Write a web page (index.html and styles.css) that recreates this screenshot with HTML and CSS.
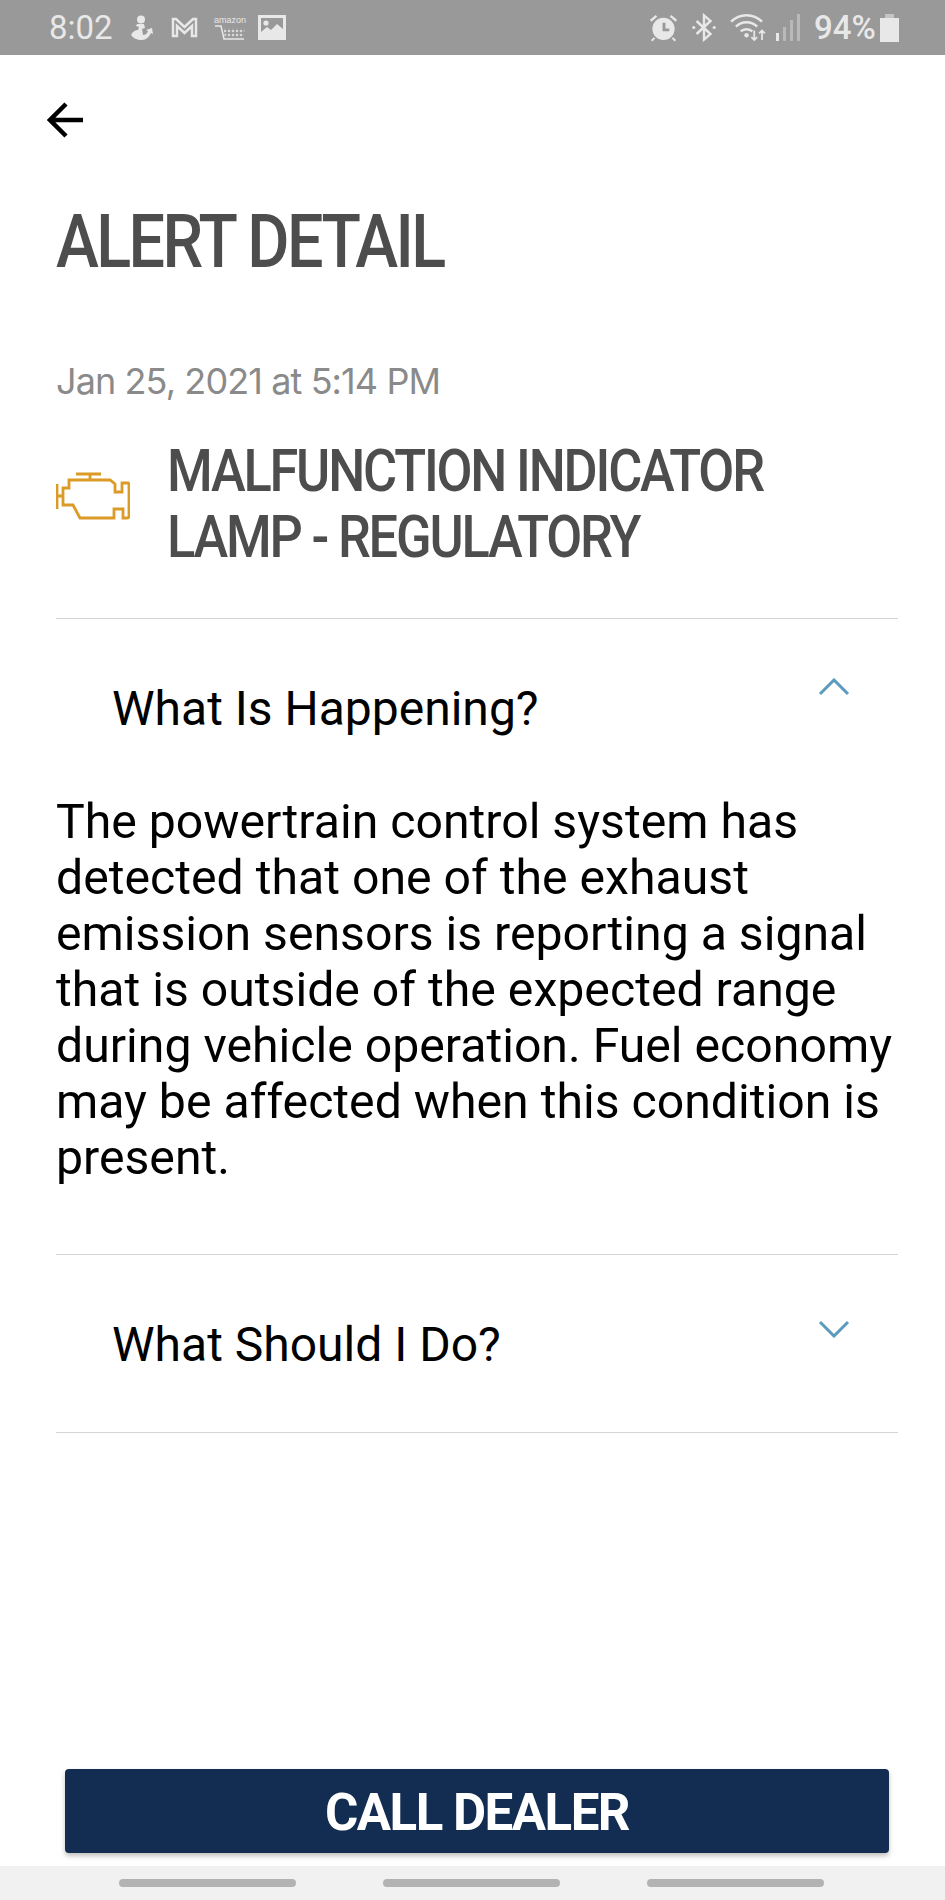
FILE: index.html
```html
<!DOCTYPE html>
<html lang="en">
<head>
  <meta charset="UTF-8">
  <title>Alert Detail</title>
  <link rel="stylesheet" href="styles.css">
</head>
<body>
  <div class="phone">
    <div class="status-bar">
      <div class="status-left">
        <span class="clock">8:02</span>
        <svg class="ic-person" viewBox="0 0 24 26"><circle cx="12" cy="4.500" r="4"/><path d="M8 9l7 0 1 4-3 1 1 6c2 0 4-1 5-4l-2-1 6-2 1 6-2-1c-2 4-5 7-9 7-5 0-9-2-11-5 1-3 4-5 7-5l1-3-3-1z"/></svg>
        <svg class="ic-mail" viewBox="0 0 27 21"><path d="M2 2h3l8.500 8L22 2h3v17h-4V9l-7.500 7L6 9v10H2z"/></svg>
        <div class="ic-amazon">
          <span class="amazon-word">amazon</span>
          <svg viewBox="0 0 30 15">
            <defs><pattern id="mesh" width="4" height="4" patternUnits="userSpaceOnUse"><circle cx="2" cy="2" r="1.300" fill="#d8d8d8"/></pattern></defs>
            <path class="cart-line" d="M0 1h6l3 13h20"/>
            <path class="cart-fill" d="M8 3h22l-2 10H10z"/>
          </svg>
        </div>
        <svg class="ic-image" viewBox="0 0 28 25"><path fill-rule="evenodd" d="M0 0h28v25H0zM3 3v14l6-5 4 3 6-6 6 5V3z"/><circle cx="8" cy="8" r="2.600"/></svg>
      </div>
      <div class="status-right">
        <svg class="ic-alarm" viewBox="0 0 30 30"><path fill-rule="evenodd" d="M15 5a11.500 11.500 0 1 1 0 23 11.500 11.500 0 0 1 0-23zM14 10v9h7v-3h-4v-6z"/><path d="M1 7l6-5 1.500 2-6 5zM29 7l-6-5-1.500 2 6 5zM5 25l-3 3 1.500 1.500 3-3zM25 25l3 3-1.500 1.500-3-3z"/></svg>
        <svg class="ic-bt" viewBox="0 0 28 30"><path class="line" d="M6 8l15 14-7 6V2l7 6L6 22"/><circle cx="3" cy="15" r="1.700"/><circle cx="25" cy="15" r="1.700"/></svg>
        <svg class="ic-wifi" viewBox="0 0 38 30"><path class="line" d="M2 9c9-9 23-9 32 0M7 14c6-6 16-6 22 0M12 19c3-3 9-3 12 0"/><circle cx="18" cy="23" r="2.300"/><path class="arrow" d="M26 18v10M23 25l3 3 3-3M34 28V18M31 21l3-3 3 3"/></svg>
        <div class="signal">
          <span class="bar bar-on bar-1"></span>
          <span class="bar bar-2"></span>
          <span class="bar bar-3"></span>
          <span class="bar bar-4"></span>
        </div>
        <span class="battery-text">94%</span>
        <div class="battery"><span class="battery-cap"></span><span class="battery-body"></span></div>
      </div>
    </div>

    <main class="content">
      <svg class="back" viewBox="0 0 38 36"><path d="M36 18H3M19 2L3 18l16 16"/></svg>
      <h1 class="page-title">ALERT DETAIL</h1>
      <p class="alert-date">Jan 25, 2021 at 5:14 PM</p>

      <div class="alert-head">
        <svg class="engine" viewBox="0 0 74 48"><path d="M20 2h25M34 2v6M1 12v25M1 24h6M13 8h41l5 4v8h7v-9h6q1 0 1 2v31q0 2-2 2h-4v-9h-9v9H24l-7-13H7V16h6z"/></svg>
        <h2 class="alert-name">MALFUNCTION INDICATOR<br>LAMP - REGULATORY</h2>
      </div>

      <section class="panel panel-open">
        <div class="panel-head">
          <span>What Is Happening?</span>
          <svg class="chev" viewBox="0 0 32 18"><path d="M2 16L16 2l14 14"/></svg>
        </div>
        <p class="panel-text">The powertrain control system has detected that one of the exhaust emission sensors is reporting a signal that is outside of the expected range during vehicle operation. Fuel economy may be affected when this condition is present.</p>
      </section>

      <section class="panel panel-closed">
        <div class="panel-head">
          <span>What Should I Do?</span>
          <svg class="chev chev-down" viewBox="0 0 32 18"><path d="M2 2l14 14L30 2"/></svg>
        </div>
      </section>
    </main>

    <div class="footer">
      <button class="call-btn">CALL DEALER</button>
    </div>
    <div class="nav-bar">
      <span class="nav-pill"></span>
      <span class="nav-pill"></span>
      <span class="nav-pill"></span>
    </div>
  </div>
</body>
</html>
```

FILE: styles.css
```css
* { box-sizing: border-box; }
html, body { margin: 0; padding: 0; }
body { background: #fff; font-family: Roboto, "Liberation Sans", sans-serif; color: #000; }
.phone { width: 945px; height: 1900px; display: flex; flex-direction: column; overflow: hidden; }

/* status bar */
.status-bar { height: 55px; flex: none; background: #999; padding: 0 46px 0 49px; display: flex; justify-content: space-between; align-items: center; color: #e8e8e8; fill: #e8e8e8; }
.status-left, .status-right { display: flex; align-items: center; }
.clock { font-size: 33px; width: 64px; margin-right: 16px; }
.ic-person { width: 24px; height: 26px; margin-right: 18px; }
.ic-mail { width: 27px; height: 21px; margin-right: 17px; fill: none; stroke: #e8e8e8; stroke-width: 2.5; }
.ic-amazon { width: 30px; margin-right: 13px; display: flex; flex-direction: column; align-items: center; }
.amazon-word { font-size: 9px; line-height: 10px; font-family: "Liberation Sans", sans-serif; }
.ic-amazon svg { width: 30px; height: 15px; }
.cart-line { fill: none; stroke: #e8e8e8; stroke-width: 1.5; }
.cart-fill { fill: url(#mesh); }
.ic-image { width: 28px; height: 25px; }
.ic-alarm { width: 29px; height: 29px; margin-right: 13px; }
.ic-bt { width: 26px; height: 29px; margin-right: 12px; }
.line { fill: none; stroke: #e8e8e8; stroke-width: 2.6; }
.arrow { fill: none; stroke: #e8e8e8; stroke-width: 1.8; }
.ic-wifi { width: 37px; height: 29px; margin-right: 10px; }
.signal { display: flex; align-items: flex-end; justify-content: space-between; width: 24px; height: 27px; margin-right: 14px; }
.bar { width: 3px; background: #b9b9b9; }
.bar-on { background: #e8e8e8; }
.bar-1 { height: 8px; }
.bar-2 { height: 14px; }
.bar-3 { height: 21px; }
.bar-4 { height: 27px; }
.battery-text { font-size: 33px; font-weight: 500; width: 61px; margin-right: 5px; white-space: nowrap; }
.battery { width: 19px; display: flex; flex-direction: column; align-items: center; }
.battery-cap { width: 9px; height: 4px; background: #c4c4c4; }
.battery-body { width: 19px; height: 24px; background: #e8e8e8; }

/* content */
.content { flex: 1; padding: 0 47px 0 56px; }
.back { display: block; width: 38px; height: 36px; margin-top: 47px; margin-left: -9px; fill: none; stroke: #000; stroke-width: 4.5; }
.page-title { margin: 63px 0 0; font-size: 75px; line-height: 80px; font-weight: 500; letter-spacing: -3px; color: #4d4d4d; transform: scaleX(.862); transform-origin: left; white-space: nowrap; }
.alert-date { margin: 78px 0 0; font-family: Inter, sans-serif; font-size: 36px; line-height: 44px; color: #8a8a8a; letter-spacing: -0.9px; white-space: nowrap; }
.alert-head { display: flex; align-items: center; margin-top: 38px; height: 126px; }
.engine { width: 74px; height: 48px; flex: none; margin: -16px 37px 0 0; fill: none; stroke: #dc9a26; stroke-width: 2.8; }
.alert-name { margin: 0; font-size: 60px; line-height: 66px; font-weight: 500; letter-spacing: -2.5px; color: #4d4d4d; transform: scaleX(.871); transform-origin: left; white-space: nowrap; }

.panel { border-top: 1px solid #d4d4d4; }
.alert-head + .panel { margin-top: 51px; }
.panel-open { height: 636px; }
.panel-closed { height: 179px; border-bottom: 1px solid #d4d4d4; }
.panel-head { display: flex; justify-content: space-between; padding: 62px 48px 0 56px; font-size: 48px; line-height: 56px; height: 175px; }
.chev { width: 32px; height: 18px; margin-top: -3px; fill: none; stroke: #5b9bbd; stroke-width: 3; }
.chev-down { margin-top: 3px; }
.panel-text { margin: 0; font-size: 48.2px; line-height: 56px; }

/* bottom */
.footer { flex: none; padding: 0 56px 13px 65px; background: #fff; }
.call-btn { display: block; width: 824px; height: 84px; padding: 2px 0 0; border: 0; border-radius: 4px; background: #132c52; color: #fff; font-family: Roboto, sans-serif; font-weight: 700; font-size: 51px; letter-spacing: -1.5px; box-shadow: 0 3px 5px rgba(0, 0, 0, .25); }
.nav-bar { flex: none; height: 34px; background: #f1f1f1; display: flex; padding: 13px 0 0 119px; gap: 87px; }
.nav-pill { width: 177px; height: 8px; border-radius: 4px; background: #b3b3b3; }
```
